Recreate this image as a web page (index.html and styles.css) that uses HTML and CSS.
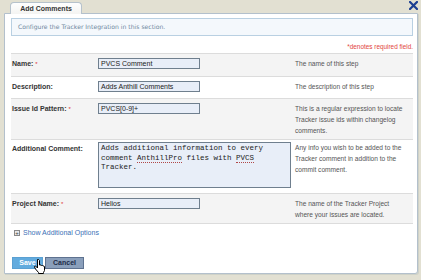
FILE: index.html
```html
<!DOCTYPE html>
<html lang="en">
<head>
  <meta charset="UTF-8" />
  <title>Add Comments</title>
  <link rel="stylesheet" href="styles.css">
</head>
<body>
  <div class="window">

    <!-- close button -->
    <a class="close" href="#">
      <svg width="9" height="9" viewBox="0 0 9 9"><path d="M1 1L8 8M8 1L1 8" stroke="#1c3f92" stroke-width="2.2" stroke-linecap="square"/></svg>
    </a>

    <div class="tabs">
      <div class="tab">Add Comments</div>
    </div>

    <div class="panel">
      <div class="info">Configure the Tracker Integration in this section.</div>
      <div class="required">*denotes required field.</div>

      <div class="form">
        <div class="row shade r-name">
          <div class="label">Name: <span class="req">*</span></div>
          <div class="field"><div class="text">PVCS Comment</div></div>
          <div class="desc">The name of this step</div>
        </div>
        <div class="row r-desc">
          <div class="label">Description:</div>
          <div class="field"><div class="text">Adds Anthill Comments</div></div>
          <div class="desc">The description of this step</div>
        </div>
        <div class="row shade r-issue">
          <div class="label">Issue Id Pattern: <span class="req">*</span></div>
          <div class="field"><div class="text">PVCS[0-9]+</div></div>
          <div class="desc">This is a regular expression to locate Tracker issue ids within changelog comments.</div>
        </div>
        <div class="row r-comment">
          <div class="label">Additional Comment:</div>
          <div class="field"><div class="area">Adds additional information to every<br>comment <span class="spell">AnthillPro</span> files with <span class="spell">PVCS</span><br>Tracker.</div></div>
          <div class="desc">Any info you wish to be added to the Tracker comment in addition to the commit comment.</div>
        </div>
        <div class="row shade r-project">
          <div class="label">Project Name: <span class="req">*</span></div>
          <div class="field"><div class="text">Helios</div></div>
          <div class="desc">The name of the Tracker Project where your issues are located.</div>
        </div>
      </div>

      <div class="more"><span class="plus">+</span>Show Additional Options</div>

      <div class="buttons">
        <span class="btn save">Save</span>
        <span class="btn cancel">Cancel</span>
        <!-- pointer over the save button -->
        <svg class="cursor" width="11" height="15" viewBox="0 0 11 15"><path d="M3.5 0.5H4.5L5.5 1.5V6H7L7.5 6.5H8.5L9 7H10L10.5 7.5V11.5L9.5 13.5V14.5H4.5V13.5L1.5 10L0.5 8V7.5L1.5 7L3.5 9V1Z" fill="#fff" stroke="#000" stroke-width="1" stroke-linejoin="round"/></svg>
      </div>
    </div>
  </div>
</body>
</html>
```

FILE: styles.css
```css
*{box-sizing:border-box}
body{
  margin:0;
  background:#e2e0d2;
  font-family:'Liberation Sans',Arial,sans-serif;
  color:#333;
}
.window{position:relative;width:421px;height:280px;padding:1px 3px 0 4px}

/* close x, top right */
.close{position:absolute;top:1px;right:2px;display:block;width:10px;height:10px;line-height:0}

.tabs{height:12px;padding-left:6px;display:flex;align-items:flex-end}
.tab{
  width:72px;
  height:12px;
  background:linear-gradient(#fefefe,#f4f4f2);
  border:1px solid #b6c2cc;
  border-bottom:none;
  border-radius:4px 4px 0 0;
  font-size:7px;
  font-weight:700;
  color:#333;
  text-align:center;
  line-height:11px;
  position:relative;
  top:1px;
}

.panel{
  width:414px;
  height:261px;
  background:#fff;
  border:1px solid #b3c0cc;
  border-radius:0 0 3px 0;
  box-shadow:1px 1px 0 #cfd2c8;
  padding:4px 4px 0 6px;
}
.info{
  height:18px;
  border:1px solid #b9d0e2;
  background:#f4f8fc;
  color:#6f88a0;
  font-family:'DejaVu Sans',Verdana,sans-serif;
  font-size:6.1px;
  line-height:16px;
  padding-left:6px;
}
.required{
  text-align:right;
  color:#e2463e;
  font-size:6.4px;
  margin-top:6px;
  height:11px;
  line-height:9px;
}

.form{border-bottom:1px solid #dcdcdc}
.row{
  display:grid;
  grid-template-columns:87px 197px 111px;
  border-top:1px solid #dcdcdc;
  padding:4px 0 0;
}
.row.shade{background:#f4f4f4}
.r-name{height:23px}
.r-desc{height:22px}
.r-issue{height:41px}
.r-comment{height:54px;padding-top:2px}
.r-project{height:30px}

.label{padding:1px 0 0 1px;font-size:7px;font-weight:700;color:#333;line-height:9px}
.r-comment .label{padding-top:2px}
.req{color:#d33;font-weight:400;font-size:6px}
.desc{font-size:6.6px;line-height:11px;color:#555}

.text{
  width:102px;
  height:11px;
  border:1px solid #6f7f8e;
  background:#e8eef8;
  font-size:7px;
  line-height:9px;
  padding-left:2px;
  color:#222;
}
.area{
  width:193px;
  height:46px;
  border:1px solid #6f7f8e;
  background:#e8eef8;
  font-family:'Liberation Mono','Courier New',monospace;
  font-size:7.5px;
  line-height:9.5px;
  padding:1px 2px;
  color:#222;
}
.spell{border-bottom:1px dotted #b04848}

.more{
  margin-top:5px;
  display:flex;
  align-items:center;
  font-size:7px;
  line-height:8px;
  color:#3b70b6;
  padding-left:3px;
}
.plus{
  width:6px;height:6px;
  border:1px solid #888;
  background:#e8e8e8;
  color:#444;
  font-size:6px;
  line-height:4px;
  text-align:center;
  margin-right:3px;
}

.buttons{position:relative;display:flex;gap:2px;margin-top:20px;padding-left:1px}
.btn{
  height:12px;
  font-size:7px;
  font-weight:700;
  line-height:10px;
  text-align:center;
  border:1px solid;
}
.save{width:31px;background:#62abde;border-color:#5aa0d2;color:#fff}
.cancel{width:39px;background:#8a9fbb;border-color:#5e7290;color:#1d2c48}
.cursor{position:absolute;left:23px;top:2px}
```
